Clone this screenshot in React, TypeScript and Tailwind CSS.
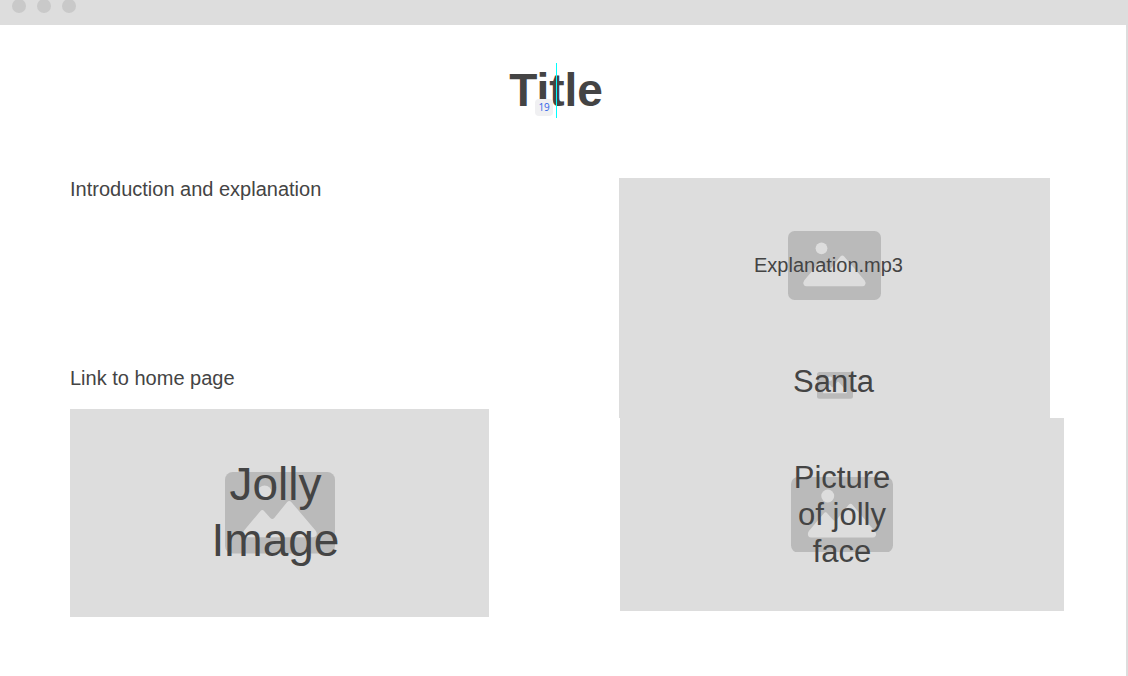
import type { ReactNode } from "react";

function ImageGlyph({ className }: { className: string }) {
  return (
    <svg viewBox="0 0 93 69" className={className} aria-hidden="true">
      <rect width="93" height="69" rx="6.5" fill="#bababa" />
      <circle cx="33.5" cy="17.3" r="5.9" fill="#dddddd" />
      <path
        d="M16.3 49.3 L29.8 33.2 Q31.5 31.2 33.2 33.2 L38.3 38.9 Q40 40.5 41.6 38.9 L52.4 25.6 Q54.3 23.4 56.2 25.6 L76.7 49.6 Q78.3 52 77 54 Q76.3 55.2 74.5 55.2 L18.5 55.2 Q16.7 55.2 15.9 54 Q14.7 51.5 16.3 49.3 Z"
        fill="#dddddd"
      />
    </svg>
  );
}

function ImagePanel({
  className,
  glyph,
  children,
}: {
  className: string;
  glyph: string;
  children: ReactNode;
}) {
  return (
    <figure className={`grid place-items-center bg-[#dddddd] ${className}`}>
      <ImageGlyph className={`col-start-1 row-start-1 ${glyph}`} />
      {children}
    </figure>
  );
}

export default function App() {
  return (
    <div className="min-h-screen border-r-2 border-[#dddddd] bg-white font-['Liberation_Sans',Arial,sans-serif] text-[#444444]">
      <div className="flex h-[25px] gap-[11px] overflow-hidden bg-[#dddddd] pl-3">
        <span className="-mt-px size-[14px] rounded-full bg-[#c9c9c9]" />
        <span className="-mt-px size-[14px] rounded-full bg-[#c9c9c9]" />
        <span className="-mt-px size-[14px] rounded-full bg-[#c9c9c9]" />
      </div>

      <header className="flex justify-center pt-[38px] pr-[14px]">
        <div className="relative">
          <h1 className="text-[46px] leading-[54px] font-bold">Title</h1>
          <span className="absolute top-9 left-[26px] w-[18px] rounded-sm bg-[#f0f0f2] text-center font-['Open_Sans',sans-serif] text-[10px] leading-[17px] text-[#3366e8]">
            19
          </span>
          <span className="absolute top-0 left-1/2 h-[55px] w-px bg-[#00ffff]" />
        </div>
      </header>

      <main className="grid grid-cols-[419fr_130fr_445fr] pt-[61px] pr-[62px] pl-[70px]">
        <section className="flex flex-col">
          <p className="h-[189px] text-[20px] leading-[22px]">Introduction and explanation</p>
          <p className="h-[42px] text-[20px] leading-[22px]">Link to home page</p>
          <ImagePanel className="h-[208px]" glyph="w-[110px]">
            <figcaption className="z-10 col-start-1 row-start-1 w-36 pr-2 pb-0.5 text-center text-[46px] leading-14">
              Jolly Image
            </figcaption>
          </ImagePanel>
        </section>

        <section className="col-start-3 flex flex-col">
          <ImagePanel className="mr-[14px] h-[175px]" glyph="w-[93px]">
            <figcaption className="z-10 col-start-1 row-start-1 pr-3 pb-0.5 text-[20px] leading-[22px]">
              Explanation.mp3
            </figcaption>
          </ImagePanel>
          <ImagePanel className="mr-[14px] h-[65px]" glyph="w-9">
            <figcaption className="z-10 col-start-1 row-start-1 pr-0.5 pb-2 text-[31px] leading-[37px]">
              Santa
            </figcaption>
          </ImagePanel>
          <ImagePanel className="ml-px h-[193px]" glyph="w-[102px]">
            <figcaption className="z-10 col-start-1 row-start-1 w-28 text-center text-[31px] leading-[37px]">
              Picture of jolly face
            </figcaption>
          </ImagePanel>
        </section>
      </main>
    </div>
  );
}
